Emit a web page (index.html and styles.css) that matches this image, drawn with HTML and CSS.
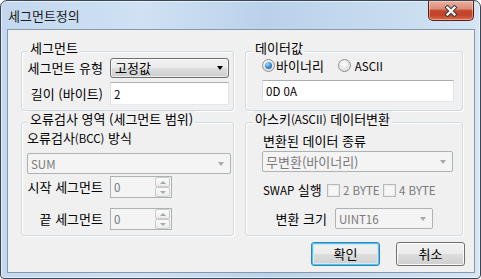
FILE: index.html
```html
<!DOCTYPE html>
<html lang="ko">
<head>
<meta charset="utf-8">
<title>세그먼트정의</title>
<link rel="stylesheet" href="styles.css">
</head>
<body>
<div class="window">
  <div class="titlebar">
    <span class="title">세그먼트정의</span>
    <div class="close">
      <svg width="14" height="12" viewBox="0 0 14 12">
        <path d="M3.5 2.5 L10.5 9.5 M10.5 2.5 L3.5 9.5" stroke="#3b3b3b" stroke-width="4.2" stroke-linecap="square" fill="none"/>
        <path d="M3.5 2.5 L10.5 9.5 M10.5 2.5 L3.5 9.5" stroke="#ffffff" stroke-width="2.2" stroke-linecap="square" fill="none"/>
      </svg>
    </div>
  </div>
  <div class="client">
    <div class="groups">
      <section class="group">
        <div class="legend">세그먼트</div>
        <div class="form form-seg">
          <span class="lbl">세그먼트 유형</span>
          <div class="combo"><span>고정값</span><i class="arrow"></i></div>
          <span class="lbl">길이 (바이트)</span>
          <div class="edit"><span class="lat">2</span></div>
        </div>
      </section>
      <section class="group gr">
        <div class="legend">데이터값</div>
        <div class="radios">
          <label class="radio"><i class="circle checked"></i><span>바이너리</span></label>
          <label class="radio r2"><i class="circle"></i><span class="lat">ASCII</span></label>
        </div>
        <div class="edit data-edit"><span class="lat">0D 0A</span></div>
      </section>
      <section class="group">
        <div class="legend">오류검사 영역 (세그먼트 범위)</div>
        <div class="sub-label bcc-label">오류검사<span class="lat">(BCC)</span> 방식</div>
        <div class="combo disabled bcc-combo"><span class="lat">SUM</span><i class="arrow"></i></div>
        <div class="form form-spin">
          <span class="lbl">시작 세그먼트</span>
          <div class="spin"><span class="val lat">0</span><div class="spin-btns"><i class="sb"><b class="up"></b></i><i class="sb"><b class="down"></b></i></div></div>
          <span class="lbl">끝 세그먼트</span>
          <div class="spin"><span class="val lat">0</span><div class="spin-btns"><i class="sb"><b class="up"></b></i><i class="sb"><b class="down"></b></i></div></div>
        </div>
      </section>
      <section class="group gr">
        <div class="legend">아스키<span class="lat">(ASCII)</span> 데이터변환</div>
        <div class="sub-label ascii-label">변환된 데이터 종류</div>
        <div class="combo disabled ascii-combo"><span>무변환(바이너리)</span><i class="arrow"></i></div>
        <div class="swap">
          <span class="swap-lbl"><span class="lat">SWAP</span> 실행</span>
          <label class="check"><i class="box"></i><span class="lat">2 BYTE</span></label>
          <label class="check"><i class="box"></i><span class="lat">4 BYTE</span></label>
        </div>
        <div class="form form-size">
          <span class="lbl">변환 크기</span>
          <div class="combo disabled"><span class="lat">UINT16</span><i class="arrow"></i></div>
        </div>
      </section>
    </div>
    <div class="buttons">
      <button class="btn primary">확인</button>
      <button class="btn">취소</button>
    </div>
  </div>
</div>
</body>
</html>
```

FILE: styles.css
```css
* { box-sizing: border-box; }
html, body { margin: 0; padding: 0; }
body {
  width: 481px;
  height: 279px;
  overflow: hidden;
  background: #ffffff;
  font-family: "Noto Sans CJK KR", "Noto Sans", sans-serif;
  font-size: 13px;
  line-height: 16px;
  color: #000;
}
.lat { font-size: 11.5px; }

.window {
  width: 481px;
  height: 279px;
  border: 1px solid #3a4654;
  border-radius: 7px 7px 4px 4px;
  background: linear-gradient(90deg, #c3d8ee 0%, #cfe1f3 30%, #b9d2ea 55%, #c6dbef 80%, #d5e5f4 100%);
  box-shadow: inset 0 0 0 1px rgba(255,255,255,0.55);
  display: flex;
  flex-direction: column;
}

.titlebar {
  height: 28px;
  display: flex;
  align-items: flex-start;
  padding-left: 7px;
  flex: none;
}
.title {
  margin-top: 7px;
  line-height: 16px;
  color: #1b1b1b;
}
.close {
  margin-left: auto;
  margin-right: 6px;
  width: 46px;
  height: 20px;
  border: 1px solid #5e1d12;
  border-top: none;
  border-radius: 0 0 5px 5px;
  background: linear-gradient(180deg, #eab1a2 0%, #dc8d79 40%, #c4462e 52%, #c24329 75%, #db6c50 100%);
  box-shadow: inset 0 0 0 1px rgba(255,230,220,0.45);
  display: flex;
  align-items: center;
  justify-content: center;
}

.client {
  flex: none;
  margin: 0 5px 5px 6px;
  height: 244px;
  border: 1px solid #8598ae;
  background: #f0f0f0;
  padding: 21px 9px 0 13px;
}

.groups {
  display: grid;
  grid-template-columns: 213px 218px;
  grid-template-rows: 60px 114px;
  column-gap: 11px;
  row-gap: 11px;
}

.group {
  border: 1px solid #d0dae1;
  border-radius: 3px;
  box-shadow: inset 1px 1px 0 #ffffff, 1px 1px 0 #ffffff;
}
.legend {
  width: fit-content;
  height: 16px;
  margin: -12px 0 0 6px;
  padding: 0 2px;
  background: #f0f0f0;
  white-space: nowrap;
}
.gr .legend { margin-left: 7px; }

.form {
  display: grid;
  grid-template-columns: 88px 119px;
  align-items: center;
}
.lbl {
  text-align: right;
  padding-right: 7px;
  white-space: nowrap;
}
.form-seg {
  margin-top: 2px;
  grid-template-rows: 20px 23px;
  row-gap: 4px;
}

.combo {
  height: 20px;
  border: 1px solid #707070;
  border-radius: 3px;
  background: linear-gradient(180deg, #f2f2f2 0%, #ebebeb 50%, #dddddd 50%, #cfcfcf 100%);
  box-shadow: inset 0 0 0 1px rgba(255,255,255,0.6);
  display: flex;
  align-items: center;
  padding-left: 4px;
  white-space: nowrap;
}
.arrow {
  margin-left: auto;
  margin-right: 5px;
  width: 0;
  height: 0;
  border-left: 3.5px solid transparent;
  border-right: 3.5px solid transparent;
  border-top: 4px solid #000;
}
.combo.disabled {
  height: 21px;
  border-color: #adb2b5;
  border-radius: 2px;
  background: #f4f4f4;
  box-shadow: none;
  color: #7a7a7a;
  padding-left: 3px;
}
.combo.disabled .arrow {
  border-top-color: #a8a8a8;
  margin-right: 6px;
}

.edit {
  height: 23px;
  border: 1px solid;
  border-color: #abadb3 #e2e3ea #e3e9ef #dbdfe6;
  background: #ffffff;
  display: flex;
  align-items: center;
  padding-left: 3px;
}

.radios {
  display: flex;
  align-items: center;
  height: 13px;
  margin: 3px 0 0 16px;
}
.radio {
  display: flex;
  align-items: center;
  gap: 1px;
}
.radio.r2 { margin-left: 14px; gap: 4px; }
.circle {
  width: 13px;
  height: 13px;
  border-radius: 50%;
  border: 1px solid #8e8f8f;
  background: radial-gradient(circle at 40% 35%, #ffffff 0%, #e6e6e6 55%, #cfcfcf 100%);
  display: flex;
  align-items: center;
  justify-content: center;
}
.circle.checked::after {
  content: "";
  width: 7px;
  height: 7px;
  border-radius: 50%;
  background: radial-gradient(circle at 35% 30%, #9adcfb 0%, #3a8fd3 50%, #17508c 100%);
}
.data-edit {
  width: 192px;
  height: 22px;
  margin: 8px 0 0 16px;
}

.sub-label { white-space: nowrap; }
.bcc-label { margin: 3px 0 0 5px; }
.bcc-combo { width: 204px; margin: 7px 0 0 5px; }
.form-spin {
  margin-top: 2px;
  grid-template-columns: 88px 62px;
  grid-template-rows: 22px 22px;
  row-gap: 10px;
}
.spin {
  height: 22px;
  border: 1px solid #adb2b5;
  background: #f4f4f4;
  display: flex;
  align-items: center;
  padding: 0 1px 0 3px;
}
.val { color: #6d7a8a; }
.spin-btns {
  margin-left: auto;
  width: 15px;
  height: 20px;
  display: flex;
  flex-direction: column;
}
.sb {
  flex: 1;
  border: 1px solid #c8cccf;
  border-radius: 2px;
  background: linear-gradient(180deg, #fbfbfb, #ececec);
  display: flex;
  align-items: center;
  justify-content: center;
}
.up, .down {
  width: 0; height: 0;
  border-left: 3px solid transparent;
  border-right: 3px solid transparent;
}
.up { border-bottom: 3px solid #a8a8a8; }
.down { border-top: 3px solid #a8a8a8; }

.ascii-label { margin: 6px 0 0 17px; }
.ascii-combo { width: 191px; margin: 2px 0 0 16px; }
.swap {
  display: flex;
  align-items: center;
  height: 14px;
  margin: 11px 0 0 17px;
  white-space: nowrap;
}
.swap-lbl { width: 64px; }
.check {
  display: flex;
  align-items: center;
  gap: 3px;
  width: 56px;
  color: #7a7a7a;
}
.box {
  width: 13px;
  height: 13px;
  border: 1px solid #b9b9b9;
  background: #f6f6f6;
  box-shadow: inset 0 0 0 1px #e9e9e9;
}
.form-size {
  margin-top: 11px;
  grid-template-columns: 89px 98px;
}
.form-size .lbl { padding-right: 8px; }

.buttons {
  display: flex;
  justify-content: flex-end;
  gap: 16px;
  margin-top: 6px;
}
.btn {
  width: 69px;
  height: 24px;
  margin: 0;
  padding: 0;
  border: 1px solid #707070;
  border-radius: 3px;
  background: linear-gradient(180deg, #f2f2f2 0%, #ebebeb 50%, #dddddd 50%, #cfcfcf 100%);
  box-shadow: inset 0 0 0 1px #fbfbfb;
  font: inherit;
  line-height: 16px;
  color: #000;
}
.btn.primary {
  border-color: #3c7fb1;
  box-shadow: inset 0 0 0 1px #48c6f4, inset 0 0 0 2px #c9ecfb;
}
```
